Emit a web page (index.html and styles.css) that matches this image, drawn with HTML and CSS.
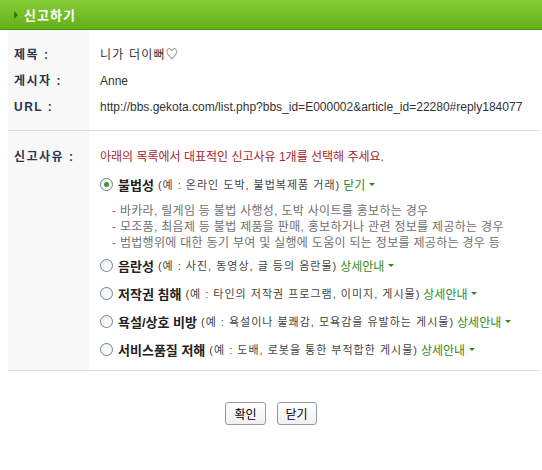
FILE: index.html
```html
<!DOCTYPE html>
<html lang="ko">
<head>
  <meta charset="UTF-8">
  <title>신고하기</title>
  <link rel="stylesheet" href="styles.css">
</head>
<body>

  <!-- 상단 타이틀 -->
  <div class="title-bar">
    <span class="title-arrow"></span>
    <span class="title-text">신고하기</span>
  </div>

  <!-- 게시글 정보 -->
  <div class="section">
    <div class="label-col">
      <div class="row label">제목 :</div>
      <div class="row label">게시자 :</div>
      <div class="row label">URL :</div>
    </div>
    <div class="value-col">
      <div class="row subject">니가 더이뻐♡</div>
      <div class="row">Anne</div>
      <div class="row url">http://bbs.gekota.com/list.php?bbs_id=E000002&amp;article_id=22280#reply184077</div>
    </div>
  </div>

  <!-- 신고 사유 -->
  <div class="section reason">
    <div class="label-col">
      <div class="row label">신고사유 :</div>
    </div>
    <div class="value-col">
      <div class="row notice">아래의 목록에서 대표적인 신고사유 1개를 선택해 주세요.</div>

      <div class="option">
        <span class="radio checked"></span>
        <b class="opt-name">불법성</b>
        <span class="opt-desc">(예 : 온라인 도박, 불법복제품 거래)</span>
        <span class="opt-link">닫기 <i class="caret"></i></span>
      </div>
      <ul class="detail">
        <li>- 바카라, 릴게임 등 불법 사행성, 도박 사이트를 홍보하는 경우</li>
        <li>- 모조품, 최음제 등 불법 제품을 판매, 홍보하거나 관련 정보를 제공하는 경우</li>
        <li>- 범법행위에 대한 동기 부여 및 실행에 도움이 되는 정보를 제공하는 경우 등</li>
      </ul>

      <div class="option">
        <span class="radio"></span>
        <b class="opt-name">음란성</b>
        <span class="opt-desc">(예 : 사진, 동영상, 글 등의 음란물)</span>
        <span class="opt-link">상세안내 <i class="caret"></i></span>
      </div>
      <div class="option">
        <span class="radio"></span>
        <b class="opt-name">저작권 침해</b>
        <span class="opt-desc">(예 : 타인의 저작권 프로그램, 이미지, 게시물)</span>
        <span class="opt-link">상세안내 <i class="caret"></i></span>
      </div>
      <div class="option">
        <span class="radio"></span>
        <b class="opt-name">욕설/상호 비방</b>
        <span class="opt-desc">(예 : 욕설이나 불쾌감, 모욕감을 유발하는 게시물)</span>
        <span class="opt-link">상세안내 <i class="caret"></i></span>
      </div>
      <div class="option">
        <span class="radio"></span>
        <b class="opt-name">서비스품질 저해</b>
        <span class="opt-desc">(예 : 도배, 로봇을 통한 부적합한 게시물)</span>
        <span class="opt-link">상세안내 <i class="caret"></i></span>
      </div>
    </div>
  </div>

  <!-- 하단 버튼 -->
  <div class="buttons">
    <button class="btn">확인</button>
    <button class="btn">닫기</button>
  </div>

</body>
</html>
```

FILE: styles.css
```css
body {
  margin: 0;
  font-family: "Liberation Sans", "Noto Sans CJK KR", sans-serif;
  font-size: 12px;
  color: #333;
  background: #fff;
}

/* 상단 타이틀 */
.title-bar {
  height: 29px;
  background: linear-gradient(#88cb36, #62b01a);
  border-bottom: 1px solid #46950f;
  display: flex;
  align-items: center;
  padding-left: 14px;
  gap: 6px;
}

.title-arrow {
  width: 0;
  height: 0;
  border-top: 4px solid transparent;
  border-bottom: 4px solid transparent;
  border-left: 4px solid #2f7a0c;
}

.title-text {
  color: #fff;
  font-weight: bold;
  font-size: 13px;
  letter-spacing: 1px;
}

/* 본문 영역 */
.section {
  display: flex;
  margin: 0 2px 0 8px;
  border-bottom: 1px solid #dcdcdc;
}

.label-col {
  width: 75px;
  padding: 12px 0 10px 6px;
  background: #f8f8f8;
}

.value-col {
  flex: 1;
  padding: 12px 0 10px 11px;
}

.reason .label-col,
.reason .value-col {
  padding-top: 13px;
  padding-bottom: 7px;
}

.row {
  height: 26px;
  line-height: 26px;
  white-space: nowrap;
}

.label {
  font-weight: bold;
  color: #2a3650;
  letter-spacing: 1.5px;
}

.subject {
  letter-spacing: 1.2px;
}

.url {
  font-size: 12px;
}

.notice {
  color: #a8262c;
}

/* 신고 항목 */
.option {
  height: 28px;
  display: flex;
  align-items: center;
  white-space: nowrap;
}

.radio {
  width: 11px;
  height: 11px;
  border: 1px solid #6f7f96;
  border-radius: 50%;
  background: linear-gradient(#eef2f6, #fff);
  margin-right: 5px;
  display: flex;
  align-items: center;
  justify-content: center;
}

.radio.checked::after {
  content: "";
  width: 5px;
  height: 5px;
  border-radius: 50%;
  background: #3b9a25;
}

.opt-name {
  font-size: 13px;
  color: #222;
  margin-right: 4px;
}

.opt-desc {
  font-size: 11px;
  color: #444;
  letter-spacing: 1px;
  margin-right: 3px;
}

.opt-link {
  color: #2f8a1a;
  display: flex;
  align-items: center;
  gap: 4px;
}

.caret {
  width: 0;
  height: 0;
  border-left: 3px solid transparent;
  border-right: 3px solid transparent;
  border-top: 3px solid #2f8a1a;
}

.detail {
  list-style: none;
  margin: 5px 0 0 0;
  padding: 0 0 0 12px;
  color: #707070;
  letter-spacing: 0.3px;
}

.detail li {
  height: 16px;
  line-height: 16px;
  white-space: nowrap;
}

/* 하단 버튼 */
.buttons {
  display: flex;
  justify-content: center;
  gap: 11px;
  margin-top: 31px;
}

.btn {
  height: 23px;
  padding: 0 8px;
  font-family: "Noto Sans CJK KR", sans-serif;
  font-size: 12px;
  color: #000;
  background: linear-gradient(#fff, #f0f0f0);
  border: 1px solid #9a9a9a;
  border-radius: 3px;
  cursor: pointer;
}
```
